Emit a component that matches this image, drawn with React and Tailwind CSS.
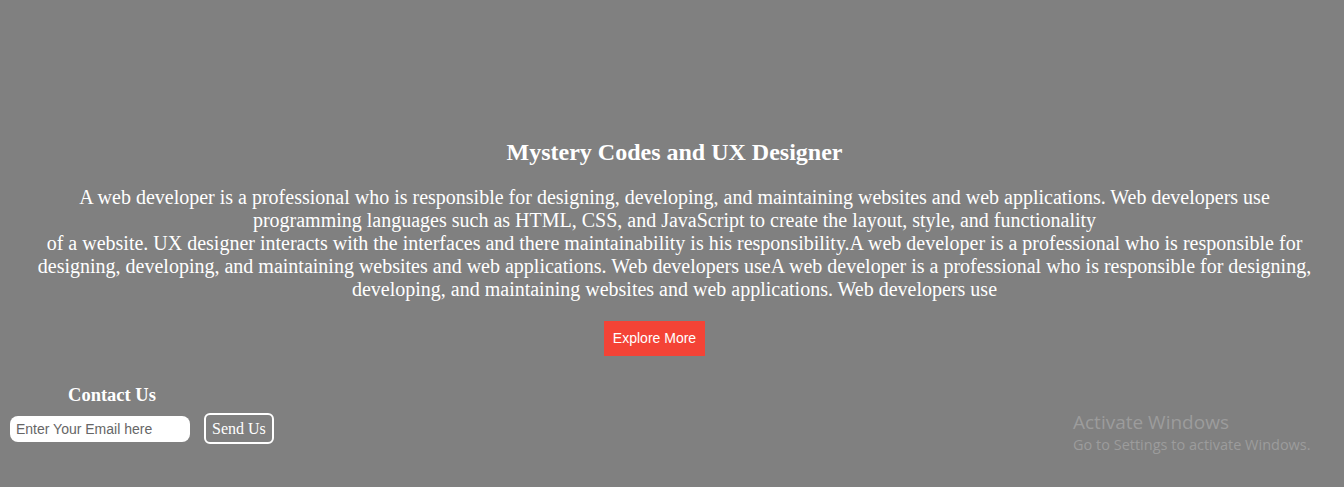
export default function App() {
  return (
    <div className="relative min-h-[487px] w-full bg-[#808080] text-white" style={{ fontFamily: '"Liberation Serif", "Times New Roman", serif' }}>
      <section className="pt-[139px] pl-[35px] pr-[30px] text-center">
        <h1 className="text-[24px] font-bold leading-[27px]">Mystery Codes and UX Designer</h1>
        <p className="mt-[20px] text-[20px] leading-[23px] whitespace-nowrap">
          A web developer is a professional who is responsible for designing, developing, and maintaining websites and web applications. Web developers use
          <br />
          programming languages such as HTML, CSS, and JavaScript to create the layout, style, and functionality
          <br />
          of a website. UX designer interacts with the interfaces and there maintainability is his responsibility.A web developer is a professional who is responsible for
          <br />
          designing, developing, and maintaining websites and web applications. Web developers useA web developer is a professional who is responsible for designing,
          <br />
          developing, and maintaining websites and web applications. Web developers use
        </p>
        <div className="mt-[20px] flex justify-center">
          <button
            type="button"
            className="mr-[40px] flex h-[35px] items-center bg-[#f44336] px-[9px] text-[14px] text-white"
            style={{ fontFamily: '"Liberation Sans", Arial, sans-serif' }}
          >
            Explore More
          </button>
        </div>
      </section>

      <section className="mt-[29px] pl-[10px]">
        <h3 className="w-[204px] text-center text-[18.5px] font-bold leading-[21px]">Contact Us</h3>
        <div className="mt-[7px] flex items-center gap-[14px]">
          <input
            type="email"
            placeholder="Enter Your Email here"
            className="h-[26px] w-[180px] rounded-[8px] bg-white px-[6px] text-[14px] text-gray-800 outline-none placeholder:text-[#666]"
            style={{ fontFamily: '"Liberation Sans", Arial, sans-serif' }}
          />
          <button type="button" className="h-[31px] rounded-[6px] border-2 border-white px-[6px] text-[16px] text-white">
            Send Us
          </button>
        </div>
      </section>

      <div className="pointer-events-none absolute left-[1073px] top-[410px] text-[#9c9c9c]" style={{ fontFamily: '"Open Sans", "Noto Sans", sans-serif' }}>
        <p className="text-[19px] leading-[25px]">Activate Windows</p>
        <p className="text-[14.5px] leading-[20px]">Go to Settings to activate Windows.</p>
      </div>
    </div>
  );
}
